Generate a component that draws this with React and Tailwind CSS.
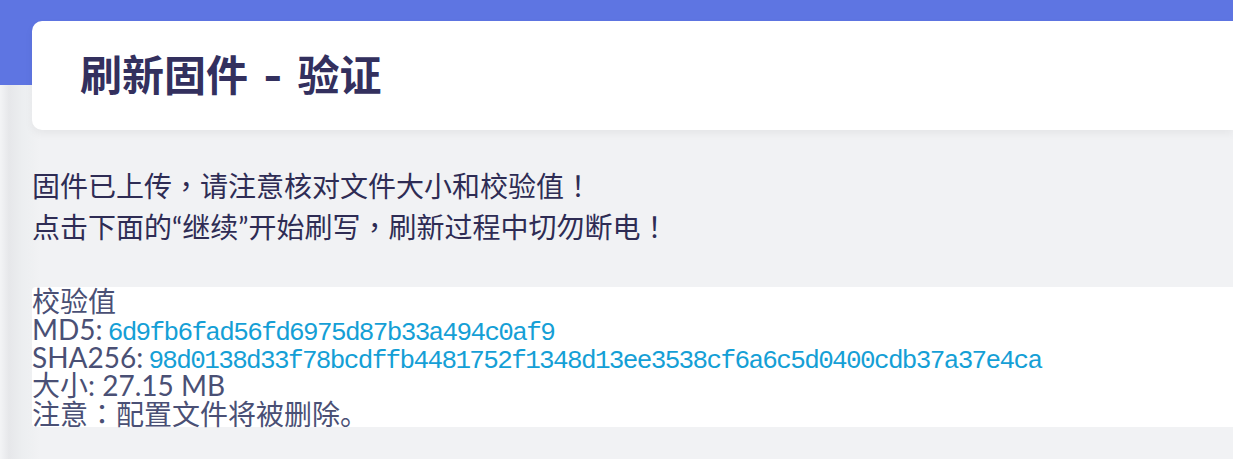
// 全角标点居中显示
function P({ children }) {
  return <span className="font-['Noto_Sans_CJK_TC',sans-serif]">{children}</span>;
}

function Row({ children }) {
  return <div className="h-[28px] whitespace-nowrap leading-[28px]">{children}</div>;
}

function Hash({ value }) {
  return (
    <span className="-ml-[2px] align-baseline font-['Liberation_Mono',monospace] text-[26px] leading-none tracking-[-1.65px] text-[#159fd6]">
      {value}
    </span>
  );
}

export default function App() {
  const md5 = "6d9fb6fad56fd6975d87b33a494c0af9";
  const sha256 = "98d0138d33f78bcdffb4481752f1348d13ee3538cf6a6c5d0400cdb37a37e4ca";

  return (
    <div className="min-h-screen w-full overflow-hidden bg-[linear-gradient(to_right,#f3f4f6_0px,#e6e7ea_9px,#eceef0_22px,#f1f2f4_40px)] font-['Lato','Noto_Sans_CJK_SC',sans-serif]">
      {/* 顶部色带 */}
      <div className="h-[85px] bg-[#5e75e2]" />

      {/* 标题卡片 */}
      <div className="-mt-[64px] ml-8 flex h-[109px] items-center rounded-l-[10px] bg-white pl-12 shadow-[0_4px_8px_rgba(0,0,0,0.05)]">
        <h1 className="font-['Inter','Noto_Sans_CJK_SC',sans-serif] text-[42px] font-bold leading-none text-[#33305e]">
          刷新固件<span className="mx-[5px]"> - </span>验证
        </h1>
      </div>

      {/* 提示 */}
      <div className="mt-[35px] pl-8 text-[28px] leading-[40px] text-[#2e2c54]">
        <p>
          固件已上传<P>，</P>请注意核对文件大小和校验值<P>！</P>
        </p>
        <p>
          点击下面的“继续”开始刷写<P>，</P>刷新过程中切勿断电<P>！</P>
        </p>
      </div>

      {/* 校验信息 */}
      <div className="mt-[40px] ml-8 rounded-l-[4px] bg-white text-[28px] text-[#4a5075]">
        <Row>校验值</Row>
        <Row>
          MD5: <Hash value={md5} />
        </Row>
        <Row>
          SHA256: <Hash value={sha256} />
        </Row>
        <Row>大小: 27.15 MB</Row>
        <Row>
          注意<P>：</P>配置文件将被删除。
        </Row>
      </div>
    </div>
  );
}
